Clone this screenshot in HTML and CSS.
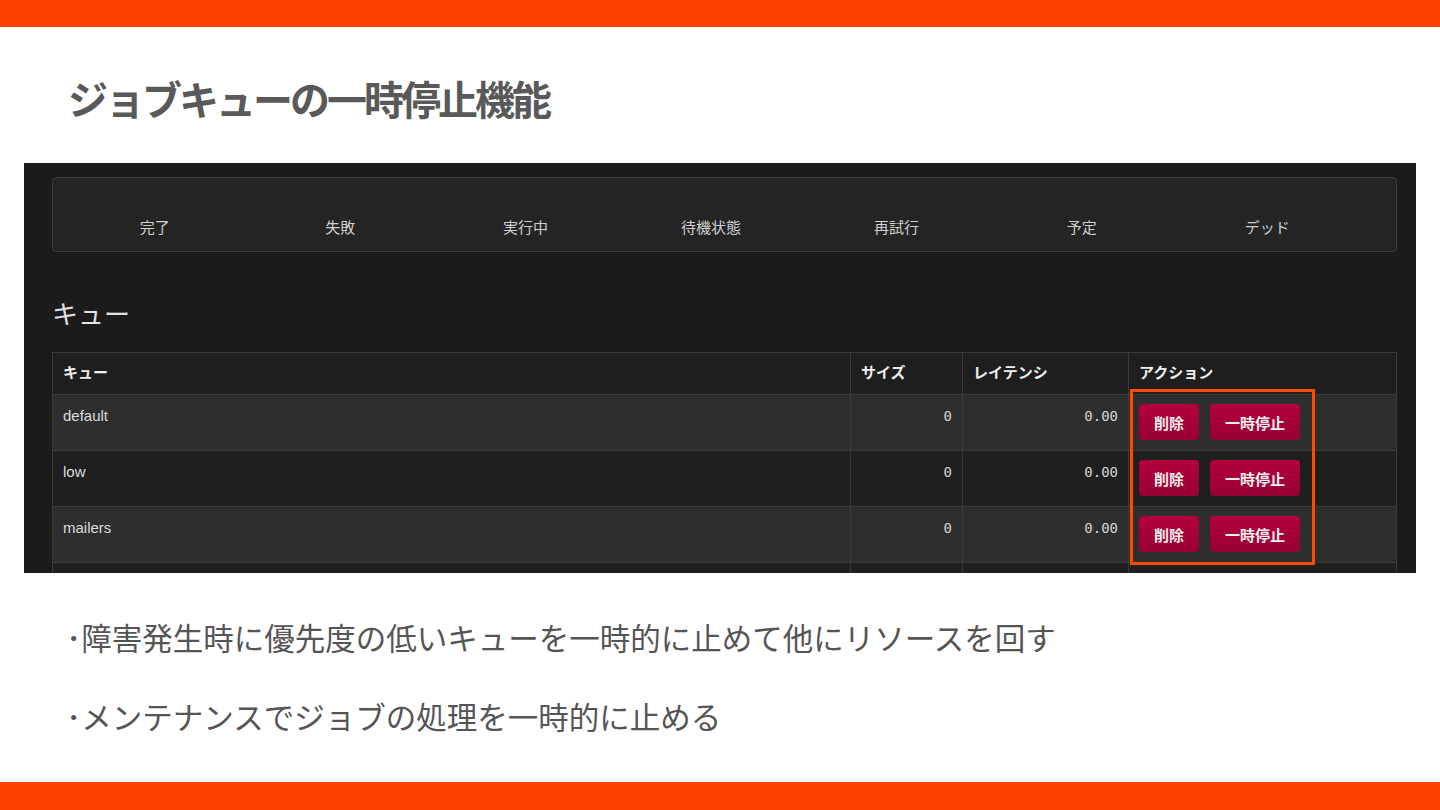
FILE: index.html
```html
<!DOCTYPE html>
<html lang="ja">
<head>
  <meta charset="utf-8">
  <title>ジョブキューの一時停止機能</title>
  <link rel="stylesheet" href="styles.css">
</head>
<body>
  <div class="bar"></div>

  <h1 class="slide-title">ジョブキューの一時停止機能</h1>

  <!-- 管理画面のスクリーンショット -->
  <div class="shot">
    <div class="stats">
      <div class="stat">完了</div>
      <div class="stat">失敗</div>
      <div class="stat">実行中</div>
      <div class="stat">待機状態</div>
      <div class="stat">再試行</div>
      <div class="stat">予定</div>
      <div class="stat">デッド</div>
    </div>

    <h2 class="queue-title">キュー</h2>

    <table class="queues">
      <thead>
        <tr>
          <th class="col-name">キュー</th>
          <th class="col-size">サイズ</th>
          <th class="col-lat">レイテンシ</th>
          <th class="col-act">アクション</th>
        </tr>
      </thead>
      <tbody>
        <tr>
          <td>default</td>
          <td class="num">0</td>
          <td class="num">0.00</td>
          <td class="actions"><button class="btn">削除</button><button class="btn">一時停止</button></td>
        </tr>
        <tr>
          <td>low</td>
          <td class="num">0</td>
          <td class="num">0.00</td>
          <td class="actions"><button class="btn">削除</button><button class="btn">一時停止</button></td>
        </tr>
        <tr>
          <td>mailers</td>
          <td class="num">0</td>
          <td class="num">0.00</td>
          <td class="actions"><button class="btn">削除</button><button class="btn">一時停止</button></td>
        </tr>
        <tr>
          <td>&nbsp;</td>
          <td class="num"></td>
          <td class="num"></td>
          <td class="actions"></td>
        </tr>
      </tbody>
    </table>

    <!-- 強調枠 -->
    <div class="highlight"></div>
  </div>

  <ul class="points">
    <li>･障害発生時に優先度の低いキューを一時的に止めて他にリソースを回す</li>
    <li>･メンテナンスでジョブの処理を一時的に止める</li>
  </ul>

  <div class="bar bar-bottom"></div>
</body>
</html>
```

FILE: styles.css
```css
/* スライド全体 */
body {
  margin: 0;
  width: 1440px;
  height: 810px;
  background: #fff;
  font-family: "Noto Sans CJK JP", "Liberation Sans", sans-serif;
  display: flex;
  flex-direction: column;
  overflow: hidden;
}
.bar {
  height: 27px;
  background: #ff4000;
  flex-shrink: 0;
}
.bar-bottom {
  margin-top: auto;
  height: 28px;
}
.slide-title {
  margin: 46px 0 0 68px;
  height: 90px;
  font-size: 40px;
  line-height: 50px;
  font-weight: bold;
  color: #595959;
  letter-spacing: -3px;
}

/* スクリーンショット部分 */
.shot {
  position: relative;
  margin-left: 24px;
  width: 1392px;
  height: 410px;
  box-sizing: border-box;
  padding: 14px 19px 0 28px;
  background: #1b1b1b;
  overflow: hidden;
}
.stats {
  display: grid;
  grid-template-columns: repeat(7, 1fr);
  height: 75px;
  box-sizing: border-box;
  border: 1px solid #3c3c3c;
  border-radius: 4px;
  background: #242424;
  align-items: end;
  padding: 0 36px 14px 9px;
}
.stat {
  text-align: center;
  font-size: 15px;
  line-height: 20px;
  color: #d0d0d0;
}
.queue-title {
  margin: 47px 0 0;
  height: 53px;
  font-size: 26px;
  line-height: 28px;
  font-weight: normal;
  color: #e2e2e2;
}

/* キュー一覧 */
.queues {
  width: 1345px;
  border-collapse: collapse;
  table-layout: fixed;
  font-size: 15px;
  color: #dcdcdc;
}
.queues th, .queues td {
  border: 1px solid #3a3a3a;
  padding: 0 10px;
  text-align: left;
}
.queues th {
  height: 37px;
  padding-bottom: 4px;
  background: #1e1e1e;
  font-weight: bold;
  color: #eee;
}
.col-name { width: 777px; }
.col-size { width: 91px; }
.col-lat { width: 145px; }
.queues td {
  height: 56px;
  vertical-align: top;
  padding-top: 11px;
  box-sizing: border-box;
  font-family: "Liberation Sans", "Noto Sans CJK JP", sans-serif;
  line-height: 20px;
}
.queues tbody tr:nth-child(odd) {
  background: #2e2e2e;
}
.queues tbody tr:nth-child(even) {
  background: #1f1f1f;
}
.queues td.num {
  text-align: right;
  font-family: "DejaVu Sans Mono", monospace;
  font-size: 14px;
  color: #d4d4d4;
}
.queues td.actions {
  padding-top: 9px;
  white-space: nowrap;
}
.btn {
  height: 36px;
  margin-right: 11px;
  padding: 0 15px;
  border: none;
  border-radius: 4px;
  background: linear-gradient(#b3003f, #970032);
  color: #eee;
  font-family: "Noto Sans CJK JP", sans-serif;
  font-size: 15px;
  font-weight: bold;
  white-space: nowrap;
}

/* 赤枠 */
.highlight {
  position: absolute;
  left: 1106px;
  top: 226px;
  width: 185px;
  height: 176px;
  box-sizing: border-box;
  border: 3px solid #ff4a00;
}

/* 箇条書き */
.points {
  list-style: none;
  margin: 42px 0 0 66px;
  padding: 0;
  font-size: 30.5px;
  line-height: 44px;
  color: #555;
}
.points li + li {
  margin-top: 35px;
}
```
